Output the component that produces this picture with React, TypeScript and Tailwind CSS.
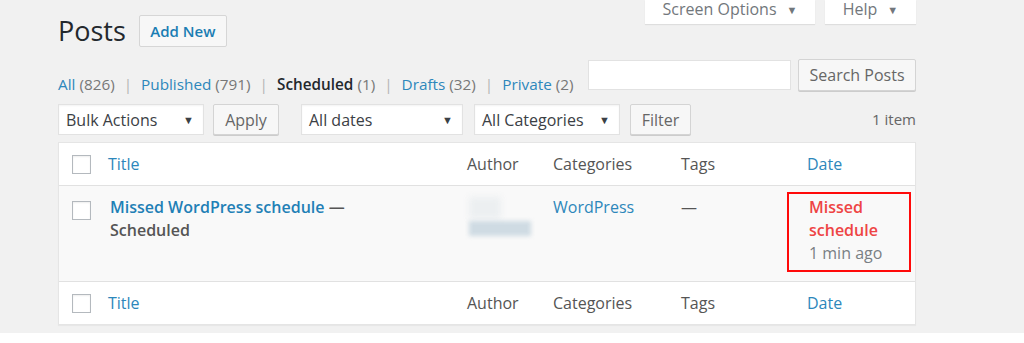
import type { ReactNode } from "react"

const font = { fontFamily: '"Open Sans", "Liberation Sans", sans-serif' }

function Caret() {
  return <span className="text-[11px] leading-none">▼</span>
}

function Checkbox() {
  return <div className="w-[19px] h-[19px] border border-[#b4b9be] bg-white shadow-[inset_0_1px_2px_rgba(0,0,0,0.07)]" />
}

function Select({ label, width }: { label: string; width: string }) {
  return (
    <div className={`${width} h-[31px] bg-white border border-[#e2e2e2] shadow-[inset_0_1px_2px_rgba(0,0,0,0.05)] flex items-center justify-between pl-[7px] pr-[9px] text-[16px] text-[#3b4045]`}>
      <span>{label}</span>
      <Caret />
    </div>
  )
}

function Button({ children, width, height = "h-[31px]" }: { children: ReactNode; width: string; height?: string }) {
  return (
    <div className={`${width} ${height} bg-[#f7f7f7] border border-[#d4d4d4] shadow-[0_1px_0_#ccc] rounded-[2px] flex items-center justify-center text-[16px] text-[#666]`}>
      {children}
    </div>
  )
}

function Sep() {
  return <span className="mx-[9px] text-[#b5b5b5]">|</span>
}

function HeadRow() {
  return (
    <div className="flex items-center h-[42px] bg-white text-[16px] text-[#555]">
      <div className="w-[49px] pl-[13px]"><Checkbox /></div>
      <div className="w-[359px] text-[#2d87bb]">Title</div>
      <div className="w-[86px]">Author</div>
      <div className="w-[128px]">Categories</div>
      <div className="w-[126px]">Tags</div>
      <div className="flex-1 text-[#2d87bb]">Date</div>
    </div>
  )
}

function Tab({ children, width }: { children: ReactNode; width: string }) {
  return (
    <div className={`${width} h-[24px] bg-white shadow-[0_1px_1px_rgba(0,0,0,0.08)] flex items-start justify-center text-[16px] leading-[18px]`}>
      <div className="flex items-center gap-[10px] text-[#72777c] h-[18px]">{children}</div>
    </div>
  )
}

export default function App() {
  return (
    <div className="w-[1024px] h-[343px] bg-white overflow-hidden" style={font}>
      <div className="h-[333px] bg-[#f1f1f1] pl-[58px] pr-[108px]">
        <div className="flex justify-between h-[59px]">
          <div className="flex items-center gap-[13px] mt-[15px] h-[32px]">
            <h1 className="text-[27px] leading-none text-[#23282d] -mt-[2px]">Posts</h1>
            <div className="w-[88px] h-[32px] bg-[#f7f7f7] border border-[#d6d6d6] rounded-[2px] flex items-center justify-center text-[15px] font-semibold text-[#1a7db3]">
              Add New
            </div>
          </div>
          <div className="flex gap-[10px] items-start">
            <Tab width="w-[170px]">Screen Options <Caret /></Tab>
            <Tab width="w-[91px]">Help <Caret /></Tab>
          </div>
        </div>

        <div className="flex items-end justify-between h-[32px]">
          <div className="text-[15.3px] text-[#777] leading-[20px] mb-[-3px]">
            <span className="text-[#2d87bb]">All</span> (826)
            <Sep />
            <span className="text-[#2d87bb]">Published</span> (791)
            <Sep />
            <span className="font-semibold text-[#23282d]">Scheduled</span> (1)
            <Sep />
            <span className="text-[#2d87bb]">Drafts</span> (32)
            <Sep />
            <span className="text-[#2d87bb]">Private</span> (2)
          </div>
          <div className="flex items-center gap-[7px] h-[32px]">
            <div className="w-[203px] h-[30px] bg-white border border-[#e2e2e2]" />
            <Button width="w-[118px]" height="h-[32px]">Search Posts</Button>
          </div>
        </div>

        <div className="flex items-center h-[31px] mt-[13px]">
          <Select label="Bulk Actions" width="w-[146px]" />
          <div className="ml-[9px]"><Button width="w-[66px]">Apply</Button></div>
          <div className="ml-[22px]"><Select label="All dates" width="w-[162px]" /></div>
          <div className="ml-[11px]"><Select label="All Categories" width="w-[146px]" /></div>
          <div className="ml-[10px]"><Button width="w-[61px]">Filter</Button></div>
          <div className="flex-1 text-right text-[15px] text-[#666]">1 item</div>
        </div>

        <div className="mt-[7px] border border-[#e5e5e5] shadow-[0_1px_1px_rgba(0,0,0,0.04)]">
          <HeadRow />
          <div className="flex items-start h-[96px] bg-[#f9f9f9] border-t border-[#e1e1e1] text-[16px] leading-[23px]">
            <div className="w-[49px] pl-[13px] pt-[15px]"><Checkbox /></div>
            <div className="w-[359px] pl-[2px] pt-[10px] font-semibold">
              <span className="text-[#1f80b6]">Missed WordPress schedule</span>
              <span className="text-[#555]"> —</span>
              <br />
              <span className="text-[#555]">Scheduled</span>
            </div>
            <div className="w-[86px] pt-[11px] pl-[2px]">
              <div className="w-[32px] h-[22px] bg-[#eceff1] blur-[3px]" />
              <div className="w-[62px] h-[15px] mt-[2px] bg-[#cfdbe3] blur-[2px]" />
            </div>
            <div className="w-[128px] pt-[10px] text-[#2d87bb]">WordPress</div>
            <div className="w-[126px] pt-[10px] text-[#555]">—</div>
            <div className="flex-1 relative pt-[10px] pl-[2px]">
              <div className="absolute left-[-20px] top-[6px] w-[124px] h-[80px] border-2 border-[#ff0a0a]" />
              <div className="font-semibold text-[#ee4444]">Missed<br />schedule</div>
              <div className="text-[#7a7f84]">1 min ago</div>
            </div>
          </div>
          <div className="border-t border-[#e1e1e1]">
            <HeadRow />
          </div>
        </div>
      </div>
    </div>
  )
}
